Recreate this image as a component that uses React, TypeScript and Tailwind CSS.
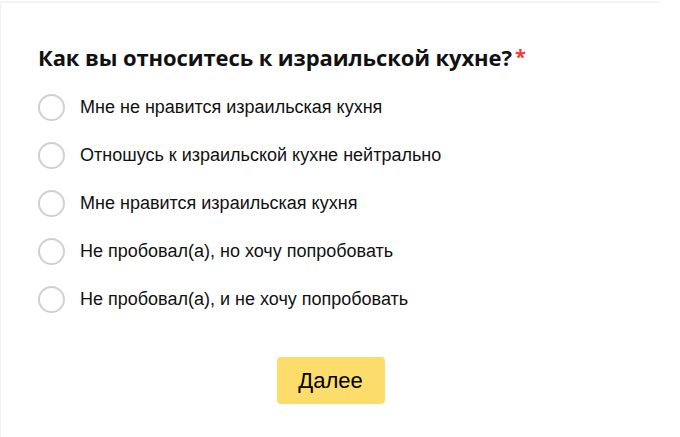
import React from "react";

const options = [
  "Мне не нравится израильская кухня",
  "Отношусь к израильской кухне нейтрально",
  "Мне нравится израильская кухня",
  "Не пробовал(а), но хочу попробовать",
  "Не пробовал(а), и не хочу попробовать",
];

export default function App() {
  return (
    <div className="w-[680px] h-[437px] bg-white overflow-hidden">
      <div className="w-[659px] h-[450px] mt-[1px] border-t-2 border-l border-[#f2f2f2] bg-white pl-[37px] pt-[39px]">
        <h1
          className="text-[22px] leading-[30px] font-bold text-[#111] flex tracking-[-0.1px]"
          style={{ fontFamily: '"Open Sans", sans-serif' }}
        >
          Как вы относитесь к израильской кухне?
          <span className="text-[#f33] ml-[3px] text-[20px]">*</span>
        </h1>
        <div className="mt-[22px] flex flex-col gap-[21px]" style={{ fontFamily: '"Liberation Sans", Arial, sans-serif' }}>
          {options.map((o) => (
            <div key={o} className="flex items-center h-[27px]">
              <span className="w-[27px] h-[27px] rounded-full border-2 border-[#d0d0d0] bg-white shrink-0" />
              <span className="ml-[15px] text-[18px] text-[#111]">{o}</span>
            </div>
          ))}
        </div>
        <div className="flex justify-center pr-[36px] mt-[44px]">
          <button
            className="w-[108px] h-[47px] rounded-[4px] bg-[#fcdc6a] text-[22px] text-black"
            style={{ fontFamily: '"Liberation Sans", Arial, sans-serif' }}
          >
            Далее
          </button>
        </div>
      </div>
    </div>
  );
}
